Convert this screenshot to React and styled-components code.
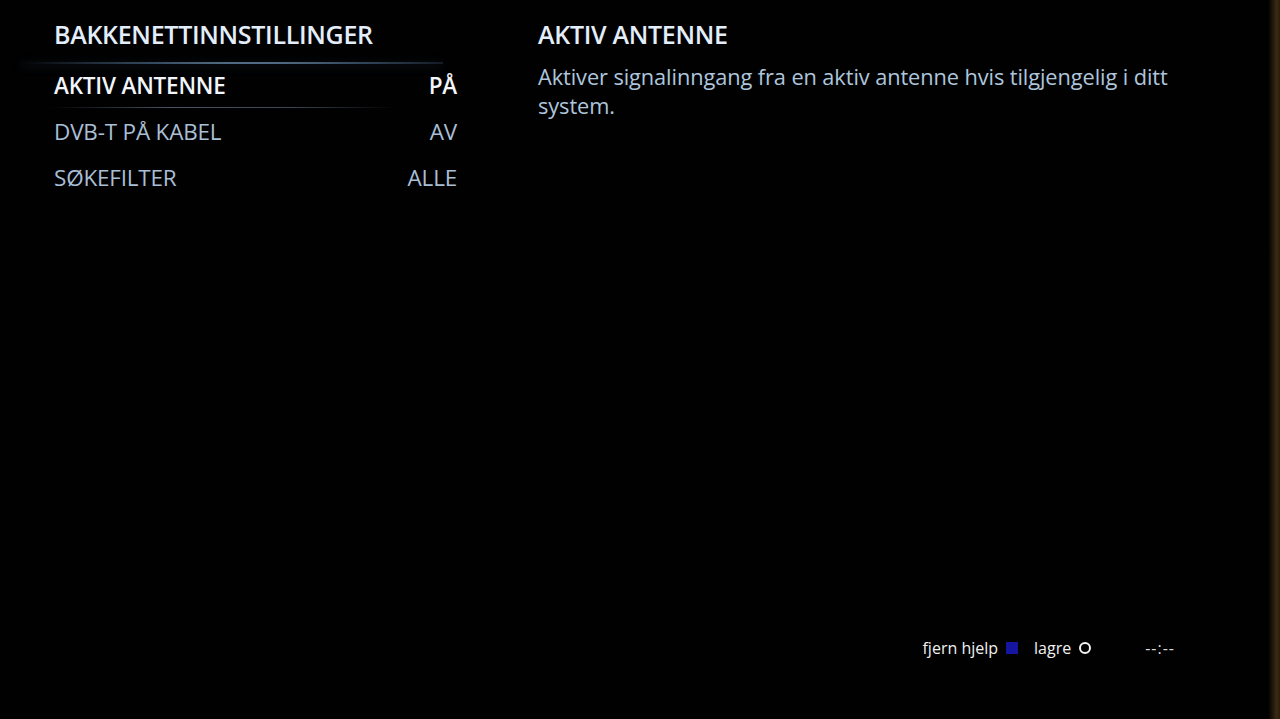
import React from 'react';
import styled, { createGlobalStyle } from 'styled-components';

const GlobalStyle = createGlobalStyle`
  html, body {
    margin: 0;
    padding: 0;
    background: #000;
  }
  body {
    font-family: "Open Sans", "Noto Sans", sans-serif;
  }
`;

const Screen = styled.div`
  position: relative;
  width: 1280px;
  height: 719px;
  overflow: hidden;
  background: #010102;
  display: flex;
  flex-direction: column;
`;

const Bezel = styled.div`
  position: absolute;
  top: 0;
  right: 0;
  width: 12px;
  height: 100%;
  background: linear-gradient(90deg, #000 0%, #1c1408 35%, #3a2a12 70%, #2a1e0c 100%);
`;

const Main = styled.div`
  flex: 1;
  display: grid;
  grid-template-columns: 484px 1fr;
  padding-top: 18px;
`;

const LeftPanel = styled.div`
  padding-left: 54px;
  padding-right: 27px;
`;

const Heading = styled.div`
  font-size: 25px;
  font-weight: 600;
  color: #e4eefa;
  letter-spacing: -0.3px;
  line-height: 32px;
  height: 32px;
  margin-bottom: 12px;
`;

const List = styled.div`
  display: flex;
  flex-direction: column;
`;

const Row = styled.div`
  position: relative;
  display: flex;
  justify-content: space-between;
  align-items: center;
  height: 46px;
  font-size: 22.5px;
  font-weight: ${p => (p.$active ? 600 : 500)};
  color: ${p => (p.$active ? '#f2f6fb' : '#a9bfd6')};
  letter-spacing: -0.2px;

  ${p => p.$active && `
    &::before {
      content: '';
      position: absolute;
      left: -34px;
      right: 14px;
      top: 0;
      height: 2px;
      background: radial-gradient(ellipse at 55% 50%, rgba(180,212,245,1) 0%, rgba(100,140,180,0.55) 45%, rgba(0,0,0,0) 80%);
      box-shadow: 0 2px 10px rgba(100,150,200,0.25);
    }
    &::after {
      content: '';
      position: absolute;
      left: -4px;
      right: 64px;
      bottom: 0;
      height: 1px;
      background: linear-gradient(90deg, rgba(0,0,0,0) 0%, rgba(120,140,165,0.6) 35%, rgba(120,140,165,0.5) 70%, rgba(0,0,0,0) 100%);
    }
  `}
`;

const RightPanel = styled.div`
  padding-left: 54px;
  padding-right: 90px;
`;

const HelpText = styled.div`
  font-size: 21.8px;
  color: #aec6dc;
  line-height: 29px;
  letter-spacing: -0.1px;
`;

const Footer = styled.div`
  display: flex;
  align-items: center;
  justify-content: flex-end;
  height: 28px;
  margin-bottom: 57px;
  padding-right: 105px;
  font-size: 16px;
  color: #f0f0f0;
`;

const Hint = styled.div`
  display: flex;
  align-items: center;
  gap: 8px;
  margin-right: 16px;
`;

const ColorKey = styled.span`
  display: inline-block;
  width: 12px;
  height: 12px;
  background: #1515a0;
`;

const RingKey = styled.span`
  display: inline-block;
  width: 8px;
  height: 8px;
  border: 2px solid #f4f4f4;
  border-radius: 50%;
`;

const Clock = styled.div`
  margin-left: 38px;
  letter-spacing: 1px;
  color: #dcdcdc;
`;

const items = [
  { label: 'AKTIV ANTENNE', value: 'PÅ', active: true },
  { label: 'DVB-T PÅ KABEL', value: 'AV' },
  { label: 'SØKEFILTER', value: 'ALLE' },
];

export default function App() {
  return (
    <Screen>
      <GlobalStyle />
      <Main>
        <LeftPanel>
          <Heading>BAKKENETTINNSTILLINGER</Heading>
          <List>
            {items.map(item => (
              <Row key={item.label} $active={item.active}>
                <span>{item.label}</span>
                <span>{item.value}</span>
              </Row>
            ))}
          </List>
        </LeftPanel>
        <RightPanel>
          <Heading>AKTIV ANTENNE</Heading>
          <HelpText>
            Aktiver signalinngang fra en aktiv antenne hvis tilgjengelig i ditt system.
          </HelpText>
        </RightPanel>
      </Main>
      <Footer>
        <Hint>
          <span>fjern hjelp</span>
          <ColorKey />
        </Hint>
        <Hint>
          <span>lagre</span>
          <RingKey />
        </Hint>
        <Clock>--:--</Clock>
      </Footer>
      <Bezel />
    </Screen>
  );
}
